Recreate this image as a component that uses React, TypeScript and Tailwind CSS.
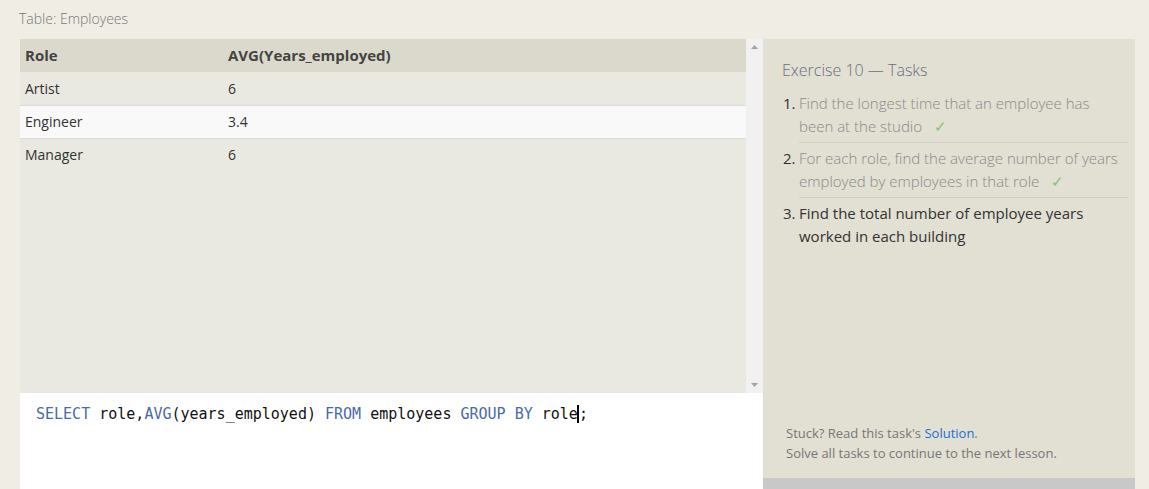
import React from 'react';

const rows = [
  { role: 'Artist', avg: '6' },
  { role: 'Engineer', avg: '3.4' },
  { role: 'Manager', avg: '6' },
];

const tasks = [
  { text: 'Find the longest time that an employee has been at the studio', done: true },
  { text: 'For each role, find the average number of years employed by employees in that role', done: true },
  { text: 'Find the total number of employee years worked in each building', done: false },
];

export default function App() {
  return (
    <div className="w-[1149px] h-[489px] overflow-hidden bg-[#f0ede5] font-['Open_Sans',sans-serif]">
      <div className="pl-[19px] pt-[8px] h-[39px] text-[14px] font-light text-[#777]">Table: Employees</div>
      <div className="flex pl-[20px] pr-[14px]">
        {/* left: results + editor */}
        <div className="w-[743px] flex flex-col">
          <div className="flex h-[354px]">
            <div className="flex-1 bg-[#eae9e1]">
              <table className="w-full border-collapse text-[14px]">
                <thead>
                  <tr className="bg-[#dad9cc] h-[33px]">
                    <th className="text-left text-[15px] font-bold text-[#444] pl-[5px] w-[208px]">Role</th>
                    <th className="text-left text-[15px] font-bold text-[#444] pl-0">AVG(Years_employed)</th>
                  </tr>
                </thead>
                <tbody>
                  {rows.map((r, i) => (
                    <tr
                      key={r.role}
                      className={
                        i === 1
                          ? 'h-[33px] bg-[#f9f9f9] border-y border-[#dcdcd6] text-[#333]'
                          : 'h-[33px] text-[#333]'
                      }
                    >
                      <td className="pl-[5px]">{r.role}</td>
                      <td>{r.avg}</td>
                    </tr>
                  ))}
                </tbody>
              </table>
            </div>
            <div className="w-[17px] bg-[#f1f1f1] flex flex-col justify-between items-center py-[6px]">
              <svg width="7" height="4" viewBox="0 0 7 4"><polygon points="3.5,0 7,4 0,4" fill="#a3a3a3" /></svg>
              <svg width="7" height="4" viewBox="0 0 7 4"><polygon points="0,0 7,0 3.5,4" fill="#a3a3a3" /></svg>
            </div>
          </div>
          <div className="h-[96px] bg-white pl-[16px] pt-[10px] font-['DejaVu_Sans_Mono',monospace] text-[15px] text-[#111] whitespace-pre">
            <span className="text-[#4a6aa8]">SELECT</span> role,<span className="text-[#4a6aa8]">AVG</span>(years_employed) <span className="text-[#4a6aa8]">FROM</span> employees <span className="text-[#4a6aa8]">GROUP BY</span> role<span className="border-l-2 border-black -ml-px">;</span>
          </div>
        </div>
        {/* right: tasks */}
        <div className="w-[372px] h-[450px] flex flex-col">
          <div className="flex-1 bg-[#e2dfd3] pl-[19px] pt-[19px] flex flex-col">
            <div className="text-[16px] font-light text-[#6b7080]">Exercise 10 — Tasks</div>
            <ol className="mt-[10px]">
              {tasks.map((t, i) => (
                <li key={i} className="flex text-[15px] leading-[23px]">
                  <span className="w-[17px] shrink-0 text-[#333] pl-px">{i + 1}.</span>
                  <div
                    className={
                      (i < 2 ? 'border-b border-[#d2cfc3] pb-[4px] mb-[4px] font-light text-[#8a8a8a]' : 'text-[#333]') +
                      ' w-[329px]'
                    }
                  >
                    <span className={i < 2 ? 'inline-block w-[322px]' : 'inline-block w-[300px]'}>
                      {t.text}
                      {t.done && <span className="ml-[12px] text-[#79c47a]">✓</span>}
                    </span>
                  </div>
                </li>
              ))}
            </ol>
            <div className="mt-auto mb-[15px] pl-[4px] text-[13px] leading-[20px] text-[#777]">
              <div>
                Stuck? Read this task's <span className="text-[#1a6ed8]">Solution</span>.
              </div>
              <div>Solve all tasks to continue to the next lesson.</div>
            </div>
          </div>
          <div className="h-[11px] bg-[#c8c8c8]" />
        </div>
      </div>
    </div>
  );
}
